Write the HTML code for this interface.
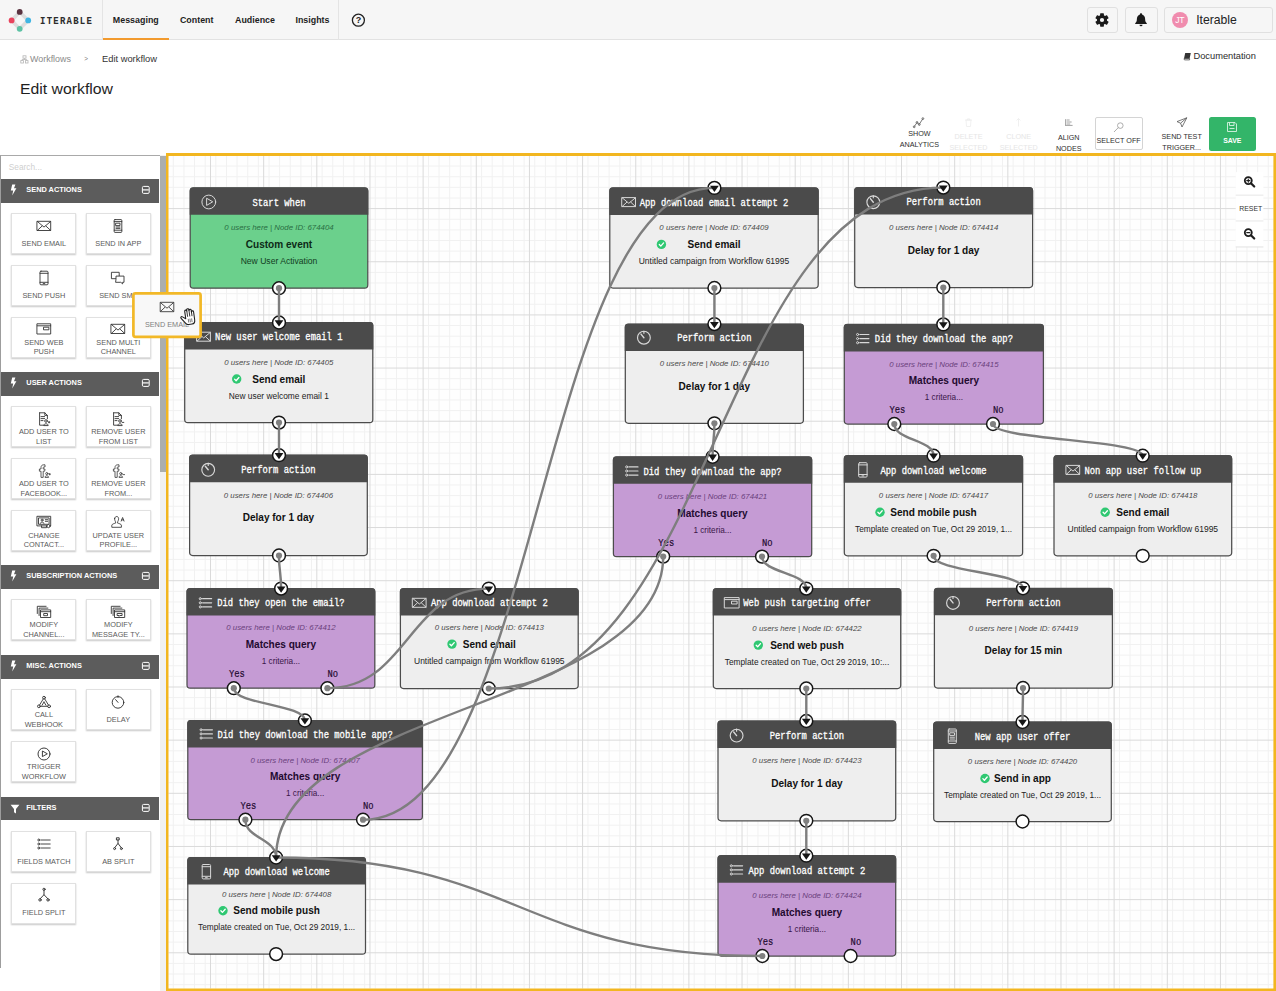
<!DOCTYPE html>
<html lang="en"><head><meta charset="utf-8"><title>Edit workflow</title>
<style>
*{box-sizing:border-box;margin:0;padding:0}
html,body{width:1276px;height:991px;overflow:hidden;background:#fff}
body{position:relative;font-family:"Liberation Sans",sans-serif;color:#333}
.abs{position:absolute}
.t{position:absolute;white-space:nowrap;line-height:1;transform:translate(-50%,-50%)}
.tl{position:absolute;white-space:nowrap;line-height:1;transform:translate(0,-50%);transform-origin:0 50%}
#nav{position:absolute;left:0;top:0;width:1276px;height:40px;background:#f6f6f6;border-bottom:1px solid #e2e2e2}
.navi{font-weight:bold;font-size:8.9px;color:#1d1d1d}
.nbtn{position:absolute;top:7px;height:26px;border:1px solid #e0e0e0;border-radius:3px;background:#f6f6f6}
.sh{position:absolute;left:1px;width:157.9px;height:23.4px;background:#5c5c5c}
.sh span{position:absolute;left:25.3px;top:46%;transform:translateY(-50%);color:#fff;font-weight:bold;font-size:7.4px;line-height:1;white-space:nowrap}
.card{position:absolute;width:65.3px;height:41px;background:#fff;border:1px solid #e1e1e1;box-shadow:0 1px 1.5px rgba(0,0,0,.22)}
.card .l{position:absolute;left:0;right:0;text-align:center;font-size:7.35px;color:#5a5a5a;line-height:9.8px;white-space:nowrap}
.card svg{position:absolute;left:50%;top:11.8px;transform:translate(-50%,-50%);overflow:visible}
.tb{position:absolute;text-align:center;font-size:7.2px;line-height:11.2px;color:#2e2e2e;white-space:nowrap;transform:translateX(-50%)}
.tb.dis{color:#e6e6e6}
</style></head>
<body>
<div id="nav"><svg class="abs" style="left:0;top:0" width="100" height="40" viewBox="0 0 100 40">
<path d="M19.7 11.9 L28.2 20.4 L19.7 28.8 L11.6 20.4 Z" fill="none" stroke="#dedede" stroke-width="3.6" stroke-linejoin="round"/>
<circle cx="19.7" cy="11.9" r="2.9" fill="#5a3340"/><circle cx="11.6" cy="20.4" r="2.9" fill="#e8435d"/>
<circle cx="28.2" cy="20.4" r="2.9" fill="#3fb5e3"/><circle cx="19.7" cy="28.8" r="2.9" fill="#5cc2a4"/>
</svg><div class="abs" style="left:40.4px;top:20.9px;white-space:nowrap;line-height:1;transform-origin:0 50%;transform:translate(0,-50%) scaleX(.87);font-family:'Liberation Mono', monospace;font-weight:bold;font-size:10.3px;letter-spacing:1.45px;color:#2b2b2b">ITERABLE</div><div class="abs" style="left:102px;top:0;width:1px;height:40px;background:#e4e4e4"></div><div class="abs" style="left:338px;top:0;width:1px;height:40px;background:#e4e4e4"></div><div class="t navi" style="left:135.8px;top:20px">Messaging</div><div class="t navi" style="left:196.7px;top:20px">Content</div><div class="t navi" style="left:255px;top:20px">Audience</div><div class="t navi" style="left:312.5px;top:20px">Insights</div><div class="abs" style="left:103px;top:37.6px;width:66.3px;height:2.4px;background:#f29a2e"></div><svg class="abs" style="left:350px;top:12px" width="17" height="17" viewBox="0 0 17 17"><circle cx="8.4" cy="8.2" r="6" fill="none" stroke="#222" stroke-width="1.3"/>
<text x="8.4" y="11.4" text-anchor="middle" font-family="Liberation Sans, sans-serif" font-weight="bold" font-size="9" fill="#222">?</text></svg><div class="nbtn" style="left:1086.5px;width:31px"></div><div class="nbtn" style="left:1125px;width:32.5px"></div><div class="nbtn" style="left:1164px;width:108.5px"></div><svg class="abs" style="left:1094px;top:12px" width="16" height="16" viewBox="-8 -8 16 16"><circle r="3.6" fill="none" stroke="#1a1a1a" stroke-width="3"/><rect x="-1.9" y="-6.7" width="3.8" height="3.6" rx=".6" transform="rotate(0)" fill="#1a1a1a"/><rect x="-1.9" y="-6.7" width="3.8" height="3.6" rx=".6" transform="rotate(60)" fill="#1a1a1a"/><rect x="-1.9" y="-6.7" width="3.8" height="3.6" rx=".6" transform="rotate(120)" fill="#1a1a1a"/><rect x="-1.9" y="-6.7" width="3.8" height="3.6" rx=".6" transform="rotate(180)" fill="#1a1a1a"/><rect x="-1.9" y="-6.7" width="3.8" height="3.6" rx=".6" transform="rotate(240)" fill="#1a1a1a"/><rect x="-1.9" y="-6.7" width="3.8" height="3.6" rx=".6" transform="rotate(300)" fill="#1a1a1a"/></svg><svg class="abs" style="left:1133px;top:12px" width="16" height="16" viewBox="0 0 16 16"><path d="M8 1.3c.7 0 1.1.5 1.1 1.1 2 .6 3 2.3 3 4.4 0 2.6.8 3.6 1.7 4.4v.8H2.2v-.8c.9-.8 1.7-1.8 1.7-4.4 0-2.1 1-3.8 3-4.4 0-.6.4-1.1 1.1-1.1z" fill="#1a1a1a"/><path d="M6.5 12.8h3a1.5 1.5 0 0 1-3 0z" fill="#1a1a1a"/></svg><div class="abs" style="left:1171.6px;top:11.8px;width:16.4px;height:16.4px;border-radius:50%;background:#f08cae"></div><div class="t" style="left:1179.8px;top:20.2px;font-size:8.6px;color:#fff;letter-spacing:-0.2px">JT</div><div class="tl" style="left:1196.2px;top:20.2px;font-size:12.2px;color:#222">Iterable</div></div>
<svg class="abs" style="left:19.5px;top:54.5px" width="9" height="9" viewBox="0 0 9 9" fill="none" stroke="#b5b5b5" stroke-width=".8"><rect x="3" y=".8" width="3" height="2.4"/><rect x=".8" y="5.6" width="2.6" height="2.4"/><rect x="5.4" y="5.6" width="2.6" height="2.4"/><path d="M4.5 3.2v1.3M2.1 5.6V4.5h4.6v1.1"/></svg><div class="tl" style="left:29.8px;top:59.9px;font-size:8.2px;color:#8a8a8a;transform:translate(0,-50%) scaleX(1.089)">Workflows</div><div class="t" style="left:86.2px;top:59.2px;font-size:8px;color:#777;transform:translate(-50%,-50%) scaleX(.8)">&gt;</div><div class="tl" style="left:102px;top:59.0px;font-size:8.6px;color:#333;transform:translate(0,-50%) scaleX(1.086)">Edit workflow</div><div class="tl" style="left:20.4px;top:89.4px;font-size:14.2px;color:#1f1f1f;transform:translate(0,-50%) scaleX(1.112)">Edit workflow</div><svg class="abs" style="left:1182.5px;top:52.3px" width="9" height="9" viewBox="0 0 9 9"><path d="M2.2 1h5.6L6.6 6.6H1z" fill="#333"/><path d="M1 6.6h5.6v1.3H1.9A.9.9 0 0 1 1 7z" fill="none" stroke="#333" stroke-width=".7"/></svg><div class="tl" style="left:1193.5px;top:57.2px;font-size:9.29px;color:#2b2b2b">Documentation</div>
<div class="tb " style="left:919.4px;top:127.6px">SHOW<br>ANALYTICS</div><div class="tb dis" style="left:968.5px;top:130.7px">DELETE<br>SELECTED</div><div class="tb dis" style="left:1018.7px;top:130.7px">CLONE<br>SELECTED</div><div class="tb " style="left:1068.7px;top:131.6px">ALIGN<br>NODES</div><div class="abs" style="left:1095px;top:117px;width:47.5px;height:32.8px;border:1px solid #d4d4d4;border-radius:2px;background:#fff"></div><div class="tb " style="left:1118.6px;top:134.7px">SELECT OFF</div><div class="tb " style="left:1181.7px;top:130.7px">SEND TEST<br>TRIGGER...</div><div class="abs" style="left:1209px;top:117px;width:46.6px;height:33.6px;border-radius:2.5px;background:#33b569"></div><div class="tb" style="left:1232.3px;top:134.7px;color:#fff;font-weight:bold;font-size:6.9px">SAVE</div><svg class="abs" style="left:912px;top:116px" width="14" height="13" viewBox="0 0 14 13" fill="none" stroke="#555" stroke-width=".8"><path d="M2.2 10.6 5 6.6l2.2 1.8 3.6-5.6"/><circle cx="2.2" cy="10.8" r=".9"/><circle cx="5" cy="6.4" r=".9"/><circle cx="7.3" cy="8.5" r=".9"/><circle cx="10.9" cy="2.6" r=".9"/></svg><svg class="abs" style="left:963px;top:117px" width="11" height="11" viewBox="0 0 11 11" fill="none" stroke="#ececec" stroke-width=".8"><path d="M3 3h5l-.5 6.5h-4zM2 3h7M4.5 3V1.8h2V3"/></svg><svg class="abs" style="left:1013px;top:117px" width="11" height="11" viewBox="0 0 11 11" fill="none" stroke="#ececec" stroke-width=".8"><path d="M5.5 1.5v8M3.5 3.5l2-2 2 2"/></svg><svg class="abs" style="left:1063px;top:117px" width="12" height="11" viewBox="0 0 12 11" fill="none" stroke="#8a8a8a" stroke-width=".8"><path d="M2.6 2.2v6M3.6 3h3M3.6 5h5M3.6 7h3.6M2 8.4h7.6"/></svg><svg class="abs" style="left:1112px;top:121px" width="13" height="13" viewBox="0 0 13 13" fill="none" stroke="#999" stroke-width=".8"><circle cx="8.3" cy="4.6" r="2.8"/><path d="M6.3 6.6 2 11"/></svg><svg class="abs" style="left:1175px;top:116px" width="14" height="13" viewBox="0 0 14 13" fill="none" stroke="#555" stroke-width=".8" stroke-linejoin="round"><path d="M11.8 1.8 2 5.6l3.6 1.6 1.4 3.8zM5.6 7.2l6.2-5.4"/></svg><svg class="abs" style="left:1225.7px;top:121.3px" width="12" height="12" viewBox="0 0 12 12" fill="none" stroke="#d8f3e2" stroke-width=".9"><path d="M1.5 1.5h7.5l1.5 1.5v7.5h-9z"/><path d="M3.5 1.5v3h4.5v-3M3.5 7.5h5"/></svg>
<div class="abs" style="left:0;top:155px;width:160px;height:813px;border-left:1px solid #9d9d9d;border-top:1px solid #a9a9a9;background:#fff"></div><div class="abs" style="left:160px;top:155px;width:6px;height:836px;background:#f1f1f1"></div><div class="abs" style="left:160px;top:155.5px;width:5.8px;height:316.3px;background:#abaead"></div><div class="tl" style="left:8.8px;top:167.2px;font-size:8.3px;color:#cfcfcf">Search...</div><div class="sh" style="top:179.3px"><svg class="abs" style="left:7.6px;top:5px" width="9" height="12" viewBox="0 0 9 12"><path d="M3.2.6H6.4L5 4.2H7.4L3.2 11.4 4.2 6.4H1.8z" fill="#fff"/></svg><span>SEND ACTIONS</span><svg class="abs" style="left:140.4px;top:5.9px" width="10" height="10" viewBox="0 0 10 10" fill="none" stroke="#fff" stroke-width="1"><rect x="1.4" y="1.4" width="6.8" height="7" rx="1.2"/><path d="M1.8 4.9h6" stroke-width="1.2"/></svg></div><div class="card" style="left:11.2px;top:213.2px"><svg width="15" height="11" viewBox="0 0 15 11" fill="none" stroke="#333" stroke-width="0.9" stroke-linejoin="round" stroke-linecap="round"><rect x=".8" y=".8" width="13.4" height="9.2"/><path d="M.9 1 7.5 6.6 14.1 1M.9 9.9l4.6-4.3M14.1 9.9 9.5 5.6"/></svg><div class="l" style="top:24.7px">SEND EMAIL</div></div><div class="card" style="left:85.7px;top:213.2px"><svg width="10" height="14" viewBox="0 0 10 14" fill="none" stroke="#333" stroke-width="0.9" stroke-linejoin="round" stroke-linecap="round"><rect x="1.2" y=".6" width="7.6" height="12.8" rx=".8"/><path d="M1.2 2.6h7.6M1.2 11.2h7.6M3 4.2h4v2.4H3zM3 8h4M3 9.4h4"/></svg><div class="l" style="top:24.7px">SEND IN APP</div></div><div class="card" style="left:11.2px;top:264.9px"><svg width="10" height="15" viewBox="0 0 10 15" fill="none" stroke="#333" stroke-width="0.9" stroke-linejoin="round" stroke-linecap="round"><rect x="1" y=".7" width="8" height="13.6" rx="1"/><path d="M1 2.8h8M1 11.8h8M4.2 13.1h1.6"/></svg><div class="l" style="top:24.7px">SEND PUSH</div></div><div class="card" style="left:85.7px;top:264.9px"><svg width="14" height="13" viewBox="0 0 14 13" fill="none" stroke="#333" stroke-width="0.9" stroke-linejoin="round" stroke-linecap="round"><rect x=".8" y=".8" width="7.4" height="6.4"/><path d="M5 7.2V4.6h8v6.2h-1.4v1.6l-1.8-1.6H5z" fill="#fff"/></svg><div class="l" style="top:24.7px">SEND SMS</div></div><div class="card" style="left:11.2px;top:316.6px"><svg width="15" height="12" viewBox="0 0 15 12" fill="none" stroke="#333" stroke-width="0.9" stroke-linejoin="round" stroke-linecap="round"><rect x=".8" y=".8" width="13.4" height="10.2"/><path d="M.8 2.8h13.4"/><rect x="7.4" y="4.2" width="5" height="2.6"/></svg><div class="l" style="top:20px">SEND WEB<br>PUSH</div></div><div class="card" style="left:85.7px;top:316.6px"><svg width="15" height="11" viewBox="0 0 15 11" fill="none" stroke="#333" stroke-width="0.9" stroke-linejoin="round" stroke-linecap="round"><rect x=".8" y=".8" width="13.4" height="9.2"/><path d="M.9 1 7.5 6.6 14.1 1M.9 9.9l4.6-4.3M14.1 9.9 9.5 5.6"/></svg><div class="l" style="top:20px">SEND MULTI<br>CHANNEL</div></div><div class="sh" style="top:372.3px"><svg class="abs" style="left:7.6px;top:5px" width="9" height="12" viewBox="0 0 9 12"><path d="M3.2.6H6.4L5 4.2H7.4L3.2 11.4 4.2 6.4H1.8z" fill="#fff"/></svg><span>USER ACTIONS</span><svg class="abs" style="left:140.4px;top:5.9px" width="10" height="10" viewBox="0 0 10 10" fill="none" stroke="#fff" stroke-width="1"><rect x="1.4" y="1.4" width="6.8" height="7" rx="1.2"/><path d="M1.8 4.9h6" stroke-width="1.2"/></svg></div><div class="card" style="left:11.2px;top:406.2px"><svg width="12" height="14" viewBox="0 0 12 14" fill="none" stroke="#333" stroke-width="0.9" stroke-linejoin="round" stroke-linecap="round"><path d="M1.6.8h5.2l2.6 2.6v3.4M1.6.8v12.4h4M6.8.8v2.6h2.6M3 4.6h3.6M3 6.6h3.6M3 8.6h2"/><circle cx="8" cy="9" r="1.3"/><path d="M5.8 13.2c0-2 4.4-2 4.4 0zM10.4 10.2h1.4M11.1 9.5v1.4"/></svg><div class="l" style="top:20px">ADD USER TO<br>LIST</div></div><div class="card" style="left:85.7px;top:406.2px"><svg width="12" height="14" viewBox="0 0 12 14" fill="none" stroke="#333" stroke-width="0.9" stroke-linejoin="round" stroke-linecap="round"><path d="M1.6.8h5.2l2.6 2.6v3.4M1.6.8v12.4h4M6.8.8v2.6h2.6M3 4.6h3.6M3 6.6h3.6M3 8.6h2"/><circle cx="8" cy="9" r="1.3"/><path d="M5.8 13.2c0-2 4.4-2 4.4 0zM10.2 10.4h1.6"/></svg><div class="l" style="top:20px">REMOVE USER<br>FROM LIST</div></div><div class="card" style="left:11.2px;top:457.9px"><svg width="14" height="14" viewBox="0 0 14 14" fill="none" stroke="#333" stroke-width="0.8" stroke-linejoin="round" stroke-linecap="round"><path d="M4 13V7.2H2.4V5H4V3.6C4 1.8 5 .8 6.8 .8H8V3H7C6.4 3 6.2 3.2 6.2 3.8V5H8L7.7 7.2H6.2V13z"/><circle cx="9.8" cy="9.6" r="1.1"/><path d="M8 13c0-1.8 3.6-1.8 3.6 0zM12 10.2h1.4M12.7 9.5v1.4"/></svg><div class="l" style="top:20px">ADD USER TO<br>FACEBOOK...</div></div><div class="card" style="left:85.7px;top:457.9px"><svg width="14" height="14" viewBox="0 0 14 14" fill="none" stroke="#333" stroke-width="0.8" stroke-linejoin="round" stroke-linecap="round"><path d="M4 13V7.2H2.4V5H4V3.6C4 1.8 5 .8 6.8 .8H8V3H7C6.4 3 6.2 3.2 6.2 3.8V5H8L7.7 7.2H6.2V13z"/><circle cx="9.8" cy="9.6" r="1.1"/><path d="M8 13c0-1.8 3.6-1.8 3.6 0zM11.8 10.6h1.8"/></svg><div class="l" style="top:20px">REMOVE USER<br>FROM...</div></div><div class="card" style="left:11.2px;top:509.6px"><svg width="15" height="13" viewBox="0 0 15 13" fill="none" stroke="#333" stroke-width="0.9" stroke-linejoin="round" stroke-linecap="round"><rect x=".8" y=".8" width="13.4" height="9.6"/><rect x="2.4" y="2.4" width="10.2" height="6.4"/><circle cx="5.6" cy="4.6" r="1"/><path d="M3.8 7.8c0-1.7 3.6-1.7 3.6 0M8.8 4.2h2.4M8.8 5.8h2.4M5 10.4v1.8h5v-1.8"/><circle cx="12" cy="10.6" r="1.6" fill="#fff"/></svg><div class="l" style="top:20px">CHANGE<br>CONTACT...</div></div><div class="card" style="left:85.7px;top:509.6px"><svg width="14" height="13" viewBox="0 0 14 13" fill="none" stroke="#333" stroke-width="0.85" stroke-linejoin="round" stroke-linecap="round"><path d="M3.6 3.2C3.6 .2 7.6 .2 7.6 3.2 7.6 5 6.8 5.6 6.6 6.6V7.6C7.8 8 10 8.4 10.4 9.6V11.8H.8V9.6C1.2 8.4 3.4 8 4.6 7.6V6.6C4.4 5.6 3.6 5 3.6 3.2zM10.2 5.6 11.6 2l1.4 3.6M10.7 4.4h1.8"/></svg><div class="l" style="top:20px">UPDATE USER<br>PROFILE...</div></div><div class="sh" style="top:565.4px"><svg class="abs" style="left:7.6px;top:5px" width="9" height="12" viewBox="0 0 9 12"><path d="M3.2.6H6.4L5 4.2H7.4L3.2 11.4 4.2 6.4H1.8z" fill="#fff"/></svg><span>SUBSCRIPTION ACTIONS</span><svg class="abs" style="left:140.4px;top:5.9px" width="10" height="10" viewBox="0 0 10 10" fill="none" stroke="#fff" stroke-width="1"><rect x="1.4" y="1.4" width="6.8" height="7" rx="1.2"/><path d="M1.8 4.9h6" stroke-width="1.2"/></svg></div><div class="card" style="left:11.2px;top:599.3px"><svg width="15" height="13" viewBox="0 0 15 13" fill="none" stroke="#333" stroke-width="0.9" stroke-linejoin="round" stroke-linecap="round"><path d="M.8 8V.8h8.8M2.6 10V2.6h8.8"/><rect x="4.4" y="4.4" width="9.8" height="7.6"/><path d="M4.4 6.2h9.8"/><rect x="7.6" y="8" width="3.4" height="2.2"/></svg><div class="l" style="top:20px">MODIFY<br>CHANNEL...</div></div><div class="card" style="left:85.7px;top:599.3px"><svg width="15" height="13" viewBox="0 0 15 13" fill="none" stroke="#333" stroke-width="0.9" stroke-linejoin="round" stroke-linecap="round"><path d="M.8 8V.8h8.8M2.6 10V2.6h8.8"/><rect x="4.4" y="4.4" width="9.8" height="7.6"/><path d="M4.4 6.2h9.8M7 8h4.6v2H9.4l-.8.9V10H7z"/></svg><div class="l" style="top:20px">MODIFY<br>MESSAGE TY...</div></div><div class="sh" style="top:655.2px"><svg class="abs" style="left:7.6px;top:5px" width="9" height="12" viewBox="0 0 9 12"><path d="M3.2.6H6.4L5 4.2H7.4L3.2 11.4 4.2 6.4H1.8z" fill="#fff"/></svg><span>MISC. ACTIONS</span><svg class="abs" style="left:140.4px;top:5.9px" width="10" height="10" viewBox="0 0 10 10" fill="none" stroke="#fff" stroke-width="1"><rect x="1.4" y="1.4" width="6.8" height="7" rx="1.2"/><path d="M1.8 4.9h6" stroke-width="1.2"/></svg></div><div class="card" style="left:11.2px;top:689.1px"><svg width="15" height="13" viewBox="0 0 15 13" fill="none" stroke="#333" stroke-width="0.9" stroke-linejoin="round" stroke-linecap="round"><circle cx="7.5" cy="2.2" r="1.4"/><circle cx="2.4" cy="10.8" r="1.4"/><circle cx="12.6" cy="10.8" r="1.4"/><path d="M6.8 3.4 3 9.6M8.2 3.4l3.8 6.2M3.8 10.8h7.4M7.5 6.5 5.5 9.8M7.5 6.5l2 3.3"/></svg><div class="l" style="top:20px">CALL<br>WEBHOOK</div></div><div class="card" style="left:85.7px;top:689.1px"><svg width="14" height="14" viewBox="0 0 14 14" fill="none" stroke="#333" stroke-width="0.95" stroke-linejoin="round" stroke-linecap="round"><circle cx="7" cy="7.4" r="5.8"/><path d="M7 7.4 4.6 4.6M7 .8v1.6"/></svg><div class="l" style="top:24.7px">DELAY</div></div><div class="card" style="left:11.2px;top:740.8px"><svg width="14" height="14" viewBox="0 0 14 14" fill="none" stroke="#333" stroke-width="0.95" stroke-linejoin="round" stroke-linecap="round"><circle cx="7" cy="7" r="6"/><path d="M5.4 4.4v5.2L10 7z"/></svg><div class="l" style="top:20px">TRIGGER<br>WORKFLOW</div></div><div class="sh" style="top:797px"><svg class="abs" style="left:8.6px;top:6.6px" width="10" height="11" viewBox="0 0 10 11"><path d="M.6.8h8.8L6 5v4.6L4 8.2V5z" fill="#fff"/></svg><span>FILTERS</span><svg class="abs" style="left:140.4px;top:5.9px" width="10" height="10" viewBox="0 0 10 10" fill="none" stroke="#fff" stroke-width="1"><rect x="1.4" y="1.4" width="6.8" height="7" rx="1.2"/><path d="M1.8 4.9h6" stroke-width="1.2"/></svg></div><div class="card" style="left:11.2px;top:830.9px"><svg width="14" height="12" viewBox="0 0 14 12" fill="none" stroke="#333" stroke-width="0.9" stroke-linejoin="round" stroke-linecap="round"><circle cx="1.8" cy="2" r="1"/><circle cx="1.8" cy="6" r="1"/><circle cx="1.8" cy="10" r="1"/><path d="M4.2 2h9M4.2 6h9M4.2 10h9"/></svg><div class="l" style="top:24.7px">FIELDS MATCH</div></div><div class="card" style="left:85.7px;top:830.9px"><svg width="10" height="14" viewBox="0 0 10 14" fill="none" stroke="#333" stroke-width="0.95" stroke-linejoin="round" stroke-linecap="round"><rect x="3.8" y=".8" width="2.4" height="2.2"/><path d="M5 3v3.4L1.8 10.6M5 6.4l3.2 4.2"/><circle cx="1.6" cy="11.6" r="1"/><circle cx="8.4" cy="11.6" r="1"/></svg><div class="l" style="top:24.7px">AB SPLIT</div></div><div class="card" style="left:11.2px;top:882.6px"><svg width="12" height="15" viewBox="0 0 12 15" fill="none" stroke="#333" stroke-width="0.95" stroke-linejoin="round" stroke-linecap="round"><circle cx="6" cy="1.8" r="1.1"/><path d="M6 2.9v4.3L2.2 11.2M6 7.2l3.8 4"/><circle cx="2" cy="12.4" r="1.2"/><circle cx="10" cy="12.4" r="1.2"/></svg><div class="l" style="top:24.7px">FIELD SPLIT</div></div>
<svg class="abs" style="left:0;top:0" width="1276" height="991" viewBox="0 0 1276 991">
<defs>
<clipPath id="cv"><rect x="168.5" y="156" width="1105" height="832.4"/></clipPath>
</defs>
<rect x="166" y="153" width="1110" height="838" fill="#fefefe"/>
<path d="M173.30 155.9V988.5M183.93 155.9V988.5M194.56 155.9V988.5M205.19 155.9V988.5M215.82 155.9V988.5M226.45 155.9V988.5M237.08 155.9V988.5M247.71 155.9V988.5M258.34 155.9V988.5M268.98 155.9V988.5M279.61 155.9V988.5M290.24 155.9V988.5M300.87 155.9V988.5M311.50 155.9V988.5M322.13 155.9V988.5M332.76 155.9V988.5M343.39 155.9V988.5M354.02 155.9V988.5M364.65 155.9V988.5M375.29 155.9V988.5M385.92 155.9V988.5M396.55 155.9V988.5M407.18 155.9V988.5M417.81 155.9V988.5M428.44 155.9V988.5M439.07 155.9V988.5M449.70 155.9V988.5M460.33 155.9V988.5M470.96 155.9V988.5M481.60 155.9V988.5M492.23 155.9V988.5M502.86 155.9V988.5M513.49 155.9V988.5M524.12 155.9V988.5M534.75 155.9V988.5M545.38 155.9V988.5M556.01 155.9V988.5M566.64 155.9V988.5M577.27 155.9V988.5M587.91 155.9V988.5M598.54 155.9V988.5M609.17 155.9V988.5M619.80 155.9V988.5M630.43 155.9V988.5M641.06 155.9V988.5M651.69 155.9V988.5M662.32 155.9V988.5M672.95 155.9V988.5M683.58 155.9V988.5M694.22 155.9V988.5M704.85 155.9V988.5M715.48 155.9V988.5M726.11 155.9V988.5M736.74 155.9V988.5M747.37 155.9V988.5M758.00 155.9V988.5M768.63 155.9V988.5M779.26 155.9V988.5M789.89 155.9V988.5M800.53 155.9V988.5M811.16 155.9V988.5M821.79 155.9V988.5M832.42 155.9V988.5M843.05 155.9V988.5M853.68 155.9V988.5M864.31 155.9V988.5M874.94 155.9V988.5M885.57 155.9V988.5M896.20 155.9V988.5M906.84 155.9V988.5M917.47 155.9V988.5M928.10 155.9V988.5M938.73 155.9V988.5M949.36 155.9V988.5M959.99 155.9V988.5M970.62 155.9V988.5M981.25 155.9V988.5M991.88 155.9V988.5M1002.51 155.9V988.5M1013.15 155.9V988.5M1023.78 155.9V988.5M1034.41 155.9V988.5M1045.04 155.9V988.5M1055.67 155.9V988.5M1066.30 155.9V988.5M1076.93 155.9V988.5M1087.56 155.9V988.5M1098.19 155.9V988.5M1108.82 155.9V988.5M1119.46 155.9V988.5M1130.09 155.9V988.5M1140.72 155.9V988.5M1151.35 155.9V988.5M1161.98 155.9V988.5M1172.61 155.9V988.5M1183.24 155.9V988.5M1193.87 155.9V988.5M1204.50 155.9V988.5M1215.13 155.9V988.5M1225.77 155.9V988.5M1236.40 155.9V988.5M1247.03 155.9V988.5M1257.66 155.9V988.5M1268.29 155.9V988.5M168.4 166.08H1273.5M168.4 176.71H1273.5M168.4 187.34H1273.5M168.4 197.97H1273.5M168.4 219.24H1273.5M168.4 229.87H1273.5M168.4 240.50H1273.5M168.4 251.13H1273.5M168.4 272.39H1273.5M168.4 283.02H1273.5M168.4 293.65H1273.5M168.4 304.28H1273.5M168.4 325.55H1273.5M168.4 336.18H1273.5M168.4 346.81H1273.5M168.4 357.44H1273.5M168.4 378.70H1273.5M168.4 389.33H1273.5M168.4 399.96H1273.5M168.4 410.59H1273.5M168.4 431.86H1273.5M168.4 442.49H1273.5M168.4 453.12H1273.5M168.4 463.75H1273.5M168.4 485.01H1273.5M168.4 495.64H1273.5M168.4 506.27H1273.5M168.4 516.90H1273.5M168.4 538.17H1273.5M168.4 548.80H1273.5M168.4 559.43H1273.5M168.4 570.06H1273.5M168.4 591.32H1273.5M168.4 601.95H1273.5M168.4 612.58H1273.5M168.4 623.21H1273.5M168.4 644.48H1273.5M168.4 655.11H1273.5M168.4 665.74H1273.5M168.4 676.37H1273.5M168.4 697.63H1273.5M168.4 708.26H1273.5M168.4 718.89H1273.5M168.4 729.52H1273.5M168.4 750.79H1273.5M168.4 761.42H1273.5M168.4 772.05H1273.5M168.4 782.68H1273.5M168.4 803.94H1273.5M168.4 814.57H1273.5M168.4 825.20H1273.5M168.4 835.83H1273.5M168.4 857.10H1273.5M168.4 867.73H1273.5M168.4 878.36H1273.5M168.4 888.99H1273.5M168.4 910.25H1273.5M168.4 920.88H1273.5M168.4 931.51H1273.5M168.4 942.14H1273.5M168.4 963.41H1273.5M168.4 974.04H1273.5M168.4 984.67H1273.5" fill="none" stroke="#f1f1f1" stroke-width="1"/>
<path d="M210.50 155.9V988.5M263.66 155.9V988.5M316.81 155.9V988.5M369.97 155.9V988.5M423.12 155.9V988.5M476.28 155.9V988.5M529.44 155.9V988.5M582.59 155.9V988.5M635.75 155.9V988.5M688.90 155.9V988.5M742.06 155.9V988.5M795.21 155.9V988.5M848.37 155.9V988.5M901.52 155.9V988.5M954.68 155.9V988.5M1007.83 155.9V988.5M1060.98 155.9V988.5M1114.14 155.9V988.5M1167.30 155.9V988.5M1220.45 155.9V988.5M168.4 208.60H1273.5M168.4 261.76H1273.5M168.4 314.91H1273.5M168.4 368.07H1273.5M168.4 421.22H1273.5M168.4 474.38H1273.5M168.4 527.54H1273.5M168.4 580.69H1273.5M168.4 633.85H1273.5M168.4 687.00H1273.5M168.4 740.15H1273.5M168.4 793.31H1273.5M168.4 846.46H1273.5M168.4 899.62H1273.5M168.4 952.78H1273.5" fill="none" stroke="#dadada" stroke-width="1"/>
<g clip-path="url(#cv)">
<g>
<rect x="190.2" y="187.8" width="177.6" height="100.4" rx="3.2" fill="#6bd08c" stroke="#4c4c4c" stroke-width="1.25"/>
<path d="M189.7 214.8V190.8a3.4 3.4 0 0 1 3.4 -3.4H364.9a3.4 3.4 0 0 1 3.4 3.4V214.8z" fill="#4b4b4b"/>
<g transform="translate(208.8 202.0)" fill="none" stroke="#d8d8d8" stroke-width="1" stroke-linejoin="round" stroke-linecap="round"><circle r="6.9"/><path d="M-2.2 -3.4v6.8L3.6 0z"/></g>
<text x="279.0" y="205.6" text-anchor="middle" font-family="Liberation Mono, monospace" font-size="10.4" fill="#fff" stroke="#fff" stroke-width=".3" textLength="53.1" lengthAdjust="spacingAndGlyphs">Start when</text>
<text x="279.0" y="230.1" text-anchor="middle" font-family="Liberation Sans, sans-serif" font-style="italic" font-size="7.85" fill="#2a6e43">0 users here | Node ID: 674404</text>
<text x="279.0" y="247.8" text-anchor="middle" font-family="Liberation Sans, sans-serif" font-weight="bold" font-size="10.05" fill="#0d2a17">Custom event</text>
<text x="279.0" y="263.8" text-anchor="middle" font-family="Liberation Sans, sans-serif" font-size="8.4" fill="#123d22" textLength="76.7" lengthAdjust="spacingAndGlyphs">New User Activation</text>
</g>
<g>
<rect x="184.7" y="322.5" width="188.1" height="100.1" rx="3.2" fill="#eeeeee" stroke="#4c4c4c" stroke-width="1.25"/>
<path d="M184.2 349.5V325.5a3.4 3.4 0 0 1 3.4 -3.4H369.9a3.4 3.4 0 0 1 3.4 3.4V349.5z" fill="#4b4b4b"/>
<g transform="translate(203.7 336.7)" fill="none" stroke="#d8d8d8" stroke-width="1" stroke-linejoin="round" stroke-linecap="round"><rect x="-6.7" y="-4.5" width="13.4" height="9"/><path d="M-6.6 -4.3 0 1.2 6.6 -4.3M-6.6 4.4l4.6-4.3M6.6 4.4 2 .1"/></g>
<text x="278.8" y="340.3" text-anchor="middle" font-family="Liberation Mono, monospace" font-size="10.4" fill="#fff" stroke="#fff" stroke-width=".3" textLength="127.4" lengthAdjust="spacingAndGlyphs">New user welcome email 1</text>
<text x="278.8" y="364.8" text-anchor="middle" font-family="Liberation Sans, sans-serif" font-style="italic" font-size="7.85" fill="#4a4a4a">0 users here | Node ID: 674405</text>
<text x="278.8" y="382.5" text-anchor="middle" font-family="Liberation Sans, sans-serif" font-weight="bold" font-size="10.05" fill="#111">Send email</text>
<text x="278.8" y="398.5" text-anchor="middle" font-family="Liberation Sans, sans-serif" font-size="8.4" fill="#222" textLength="100" lengthAdjust="spacingAndGlyphs">New user welcome email 1</text>
<g transform="translate(236.7 379.0)"><circle r="4.7" fill="#2fc872"/><path d="M-2.1 .1 -.6 1.7 2.2 -1.5" fill="none" stroke="#fff" stroke-width="1.3" stroke-linecap="round" stroke-linejoin="round"/></g>
</g>
<g>
<rect x="189.6" y="455.2" width="177.7" height="100.3" rx="3.2" fill="#eeeeee" stroke="#4c4c4c" stroke-width="1.25"/>
<path d="M189.1 482.2V458.2a3.4 3.4 0 0 1 3.4 -3.4H364.4a3.4 3.4 0 0 1 3.4 3.4V482.2z" fill="#4b4b4b"/>
<g transform="translate(208.2 469.4)" fill="none" stroke="#d8d8d8" stroke-width="1" stroke-linejoin="round" stroke-linecap="round"><circle r="6.4" cy=".4" stroke-width="1.15"/><path d="M0 .4 -2.9 -3.2" stroke-width="1.4"/><path d="M0 -6v2" stroke-width="1.2"/></g>
<text x="278.4" y="473.0" text-anchor="middle" font-family="Liberation Mono, monospace" font-size="10.4" fill="#fff" stroke="#fff" stroke-width=".3" textLength="74.3" lengthAdjust="spacingAndGlyphs">Perform action</text>
<text x="278.4" y="497.5" text-anchor="middle" font-family="Liberation Sans, sans-serif" font-style="italic" font-size="7.85" fill="#4a4a4a">0 users here | Node ID: 674406</text>
<text x="278.4" y="521.2" text-anchor="middle" font-family="Liberation Sans, sans-serif" font-weight="bold" font-size="10.05" fill="#111">Delay for 1 day</text>
</g>
<g>
<rect x="187.0" y="588.6" width="187.8" height="99.6" rx="3.2" fill="#c59bd4" stroke="#4c4c4c" stroke-width="1.25"/>
<path d="M186.5 615.6V591.6a3.4 3.4 0 0 1 3.4 -3.4H371.9a3.4 3.4 0 0 1 3.4 3.4V615.6z" fill="#4b4b4b"/>
<g transform="translate(205.2 602.8)" fill="none" stroke="#d8d8d8" stroke-width="1" stroke-linejoin="round" stroke-linecap="round"><circle cx="-4.9" cy="-4.1" r="1.05"/><circle cx="-4.9" cy="0" r="1.05"/><circle cx="-4.9" cy="4.1" r="1.05"/><path d="M-2.6 -4.1h9M-2.6 0h9M-2.6 4.1h9" stroke-width="1.2"/></g>
<text x="280.9" y="606.4" text-anchor="middle" font-family="Liberation Mono, monospace" font-size="10.4" fill="#fff" stroke="#fff" stroke-width=".3" textLength="127.4" lengthAdjust="spacingAndGlyphs">Did they open the email?</text>
<text x="280.9" y="629.8" text-anchor="middle" font-family="Liberation Sans, sans-serif" font-style="italic" font-size="7.85" fill="#6a3f7c">0 users here | Node ID: 674412</text>
<text x="280.9" y="647.5" text-anchor="middle" font-family="Liberation Sans, sans-serif" font-weight="bold" font-size="10.05" fill="#230a30">Matches query</text>
<text x="280.9" y="663.5" text-anchor="middle" font-family="Liberation Sans, sans-serif" font-size="8.4" fill="#3a1648" textLength="38.2" lengthAdjust="spacingAndGlyphs">1 criteria...</text>
<text x="228.9" y="677.2" font-family="Liberation Mono, monospace" font-size="10.4" fill="#230a30" stroke="#230a30" stroke-width=".2" textLength="15.9" lengthAdjust="spacingAndGlyphs">Yes</text>
<text x="327.4" y="677.2" font-family="Liberation Mono, monospace" font-size="10.4" fill="#230a30" stroke="#230a30" stroke-width=".2" textLength="10.6" lengthAdjust="spacingAndGlyphs">No</text>
</g>
<g>
<rect x="187.8" y="720.5" width="234.6" height="99.2" rx="3.2" fill="#c59bd4" stroke="#4c4c4c" stroke-width="1.25"/>
<path d="M187.3 747.5V723.5a3.4 3.4 0 0 1 3.4 -3.4H419.5a3.4 3.4 0 0 1 3.4 3.4V747.5z" fill="#4b4b4b"/>
<g transform="translate(206.0 733.9)" fill="none" stroke="#d8d8d8" stroke-width="1" stroke-linejoin="round" stroke-linecap="round"><circle cx="-4.9" cy="-4.1" r="1.05"/><circle cx="-4.9" cy="0" r="1.05"/><circle cx="-4.9" cy="4.1" r="1.05"/><path d="M-2.6 -4.1h9M-2.6 0h9M-2.6 4.1h9" stroke-width="1.2"/></g>
<text x="305.1" y="737.5" text-anchor="middle" font-family="Liberation Mono, monospace" font-size="10.4" fill="#fff" stroke="#fff" stroke-width=".3" textLength="175.2" lengthAdjust="spacingAndGlyphs">Did they download the mobile app?</text>
<text x="305.1" y="762.5" text-anchor="middle" font-family="Liberation Sans, sans-serif" font-style="italic" font-size="7.85" fill="#6a3f7c">0 users here | Node ID: 674407</text>
<text x="305.1" y="780.2" text-anchor="middle" font-family="Liberation Sans, sans-serif" font-weight="bold" font-size="10.05" fill="#230a30">Matches query</text>
<text x="305.1" y="796.2" text-anchor="middle" font-family="Liberation Sans, sans-serif" font-size="8.4" fill="#3a1648" textLength="38.2" lengthAdjust="spacingAndGlyphs">1 criteria...</text>
<text x="240.5" y="808.7" font-family="Liberation Mono, monospace" font-size="10.4" fill="#230a30" stroke="#230a30" stroke-width=".2" textLength="15.9" lengthAdjust="spacingAndGlyphs">Yes</text>
<text x="363.0" y="808.7" font-family="Liberation Mono, monospace" font-size="10.4" fill="#230a30" stroke="#230a30" stroke-width=".2" textLength="10.6" lengthAdjust="spacingAndGlyphs">No</text>
</g>
<g>
<rect x="187.8" y="857.5" width="177.7" height="96.6" rx="3.2" fill="#eeeeee" stroke="#4c4c4c" stroke-width="1.25"/>
<path d="M187.3 884.5V860.5a3.4 3.4 0 0 1 3.4 -3.4H362.6a3.4 3.4 0 0 1 3.4 3.4V884.5z" fill="#4b4b4b"/>
<g transform="translate(206.4 871.7)" fill="none" stroke="#d8d8d8" stroke-width="1" stroke-linejoin="round" stroke-linecap="round"><rect x="-4.2" y="-7.2" width="8.4" height="14.4" rx="1"/><path d="M-4.2 -5h8.4M-4.2 4.6h8.4M-.9 6h1.8"/></g>
<text x="276.6" y="875.3" text-anchor="middle" font-family="Liberation Mono, monospace" font-size="10.4" fill="#fff" stroke="#fff" stroke-width=".3" textLength="106.2" lengthAdjust="spacingAndGlyphs">App download welcome</text>
<text x="276.6" y="896.5" text-anchor="middle" font-family="Liberation Sans, sans-serif" font-style="italic" font-size="7.85" fill="#4a4a4a">0 users here | Node ID: 674408</text>
<text x="276.6" y="914.2" text-anchor="middle" font-family="Liberation Sans, sans-serif" font-weight="bold" font-size="10.05" fill="#111">Send mobile push</text>
<text x="276.6" y="930.2" text-anchor="middle" font-family="Liberation Sans, sans-serif" font-size="8.4" fill="#222" textLength="157" lengthAdjust="spacingAndGlyphs">Template created on Tue, Oct 29 2019, 1...</text>
<g transform="translate(223.0 910.7)"><circle r="4.7" fill="#2fc872"/><path d="M-2.1 .1 -.6 1.7 2.2 -1.5" fill="none" stroke="#fff" stroke-width="1.3" stroke-linecap="round" stroke-linejoin="round"/></g>
</g>
<g>
<rect x="400.4" y="588.6" width="177.8" height="99.9" rx="3.2" fill="#eeeeee" stroke="#4c4c4c" stroke-width="1.25"/>
<path d="M399.9 615.6V591.6a3.4 3.4 0 0 1 3.4 -3.4H575.3a3.4 3.4 0 0 1 3.4 3.4V615.6z" fill="#4b4b4b"/>
<g transform="translate(419.4 602.8)" fill="none" stroke="#d8d8d8" stroke-width="1" stroke-linejoin="round" stroke-linecap="round"><rect x="-6.7" y="-4.5" width="13.4" height="9"/><path d="M-6.6 -4.3 0 1.2 6.6 -4.3M-6.6 4.4l4.6-4.3M6.6 4.4 2 .1"/></g>
<text x="489.3" y="606.4" text-anchor="middle" font-family="Liberation Mono, monospace" font-size="10.4" fill="#fff" stroke="#fff" stroke-width=".3" textLength="116.8" lengthAdjust="spacingAndGlyphs">App download attempt 2</text>
<text x="489.3" y="629.9" text-anchor="middle" font-family="Liberation Sans, sans-serif" font-style="italic" font-size="7.85" fill="#4a4a4a">0 users here | Node ID: 674413</text>
<text x="489.3" y="647.6" text-anchor="middle" font-family="Liberation Sans, sans-serif" font-weight="bold" font-size="10.05" fill="#111">Send email</text>
<text x="489.3" y="663.6" text-anchor="middle" font-family="Liberation Sans, sans-serif" font-size="8.4" fill="#222" textLength="150.6" lengthAdjust="spacingAndGlyphs">Untitled campaign from Workflow 61995</text>
<g transform="translate(452.0 644.1)"><circle r="4.7" fill="#2fc872"/><path d="M-2.1 .1 -.6 1.7 2.2 -1.5" fill="none" stroke="#fff" stroke-width="1.3" stroke-linecap="round" stroke-linejoin="round"/></g>
</g>
<g>
<rect x="609.8" y="187.9" width="208.4" height="100.1" rx="3.2" fill="#eeeeee" stroke="#4c4c4c" stroke-width="1.25"/>
<path d="M609.3 214.9V190.9a3.4 3.4 0 0 1 3.4 -3.4H815.3a3.4 3.4 0 0 1 3.4 3.4V214.9z" fill="#4b4b4b"/>
<g transform="translate(628.8 202.1)" fill="none" stroke="#d8d8d8" stroke-width="1" stroke-linejoin="round" stroke-linecap="round"><rect x="-6.7" y="-4.5" width="13.4" height="9"/><path d="M-6.6 -4.3 0 1.2 6.6 -4.3M-6.6 4.4l4.6-4.3M6.6 4.4 2 .1"/></g>
<text x="714.0" y="205.7" text-anchor="middle" font-family="Liberation Mono, monospace" font-size="10.4" fill="#fff" stroke="#fff" stroke-width=".3" textLength="148.7" lengthAdjust="spacingAndGlyphs">App download email attempt 2</text>
<text x="714.0" y="230.2" text-anchor="middle" font-family="Liberation Sans, sans-serif" font-style="italic" font-size="7.85" fill="#4a4a4a">0 users here | Node ID: 674409</text>
<text x="714.0" y="247.9" text-anchor="middle" font-family="Liberation Sans, sans-serif" font-weight="bold" font-size="10.05" fill="#111">Send email</text>
<text x="714.0" y="263.9" text-anchor="middle" font-family="Liberation Sans, sans-serif" font-size="8.4" fill="#222" textLength="150.6" lengthAdjust="spacingAndGlyphs">Untitled campaign from Workflow 61995</text>
<g transform="translate(661.4 244.4)"><circle r="4.7" fill="#2fc872"/><path d="M-2.1 .1 -.6 1.7 2.2 -1.5" fill="none" stroke="#fff" stroke-width="1.3" stroke-linecap="round" stroke-linejoin="round"/></g>
</g>
<g>
<rect x="625.3" y="324.1" width="178.1" height="99.2" rx="3.2" fill="#eeeeee" stroke="#4c4c4c" stroke-width="1.25"/>
<path d="M624.8 351.1V327.1a3.4 3.4 0 0 1 3.4 -3.4H800.5a3.4 3.4 0 0 1 3.4 3.4V351.1z" fill="#4b4b4b"/>
<g transform="translate(643.9 337.3)" fill="none" stroke="#d8d8d8" stroke-width="1" stroke-linejoin="round" stroke-linecap="round"><circle r="6.4" cy=".4" stroke-width="1.15"/><path d="M0 .4 -2.9 -3.2" stroke-width="1.4"/><path d="M0 -6v2" stroke-width="1.2"/></g>
<text x="714.3" y="340.9" text-anchor="middle" font-family="Liberation Mono, monospace" font-size="10.4" fill="#fff" stroke="#fff" stroke-width=".3" textLength="74.3" lengthAdjust="spacingAndGlyphs">Perform action</text>
<text x="714.3" y="366.4" text-anchor="middle" font-family="Liberation Sans, sans-serif" font-style="italic" font-size="7.85" fill="#4a4a4a">0 users here | Node ID: 674410</text>
<text x="714.3" y="390.1" text-anchor="middle" font-family="Liberation Sans, sans-serif" font-weight="bold" font-size="10.05" fill="#111">Delay for 1 day</text>
</g>
<g>
<rect x="613.4" y="456.8" width="198.3" height="99.8" rx="3.2" fill="#c59bd4" stroke="#4c4c4c" stroke-width="1.25"/>
<path d="M612.9 483.8V459.8a3.4 3.4 0 0 1 3.4 -3.4H808.8a3.4 3.4 0 0 1 3.4 3.4V483.8z" fill="#4b4b4b"/>
<g transform="translate(631.6 471.0)" fill="none" stroke="#d8d8d8" stroke-width="1" stroke-linejoin="round" stroke-linecap="round"><circle cx="-4.9" cy="-4.1" r="1.05"/><circle cx="-4.9" cy="0" r="1.05"/><circle cx="-4.9" cy="4.1" r="1.05"/><path d="M-2.6 -4.1h9M-2.6 0h9M-2.6 4.1h9" stroke-width="1.2"/></g>
<text x="712.5" y="474.6" text-anchor="middle" font-family="Liberation Mono, monospace" font-size="10.4" fill="#fff" stroke="#fff" stroke-width=".3" textLength="138.1" lengthAdjust="spacingAndGlyphs">Did they download the app?</text>
<text x="712.5" y="499.1" text-anchor="middle" font-family="Liberation Sans, sans-serif" font-style="italic" font-size="7.85" fill="#6a3f7c">0 users here | Node ID: 674421</text>
<text x="712.5" y="516.8" text-anchor="middle" font-family="Liberation Sans, sans-serif" font-weight="bold" font-size="10.05" fill="#230a30">Matches query</text>
<text x="712.5" y="532.8" text-anchor="middle" font-family="Liberation Sans, sans-serif" font-size="8.4" fill="#3a1648" textLength="38.2" lengthAdjust="spacingAndGlyphs">1 criteria...</text>
<text x="658.3" y="545.6" font-family="Liberation Mono, monospace" font-size="10.4" fill="#230a30" stroke="#230a30" stroke-width=".2" textLength="15.9" lengthAdjust="spacingAndGlyphs">Yes</text>
<text x="762.0" y="545.6" font-family="Liberation Mono, monospace" font-size="10.4" fill="#230a30" stroke="#230a30" stroke-width=".2" textLength="10.6" lengthAdjust="spacingAndGlyphs">No</text>
</g>
<g>
<rect x="713.3" y="588.6" width="187.4" height="99.9" rx="3.2" fill="#eeeeee" stroke="#4c4c4c" stroke-width="1.25"/>
<path d="M712.8 615.6V591.6a3.4 3.4 0 0 1 3.4 -3.4H897.8a3.4 3.4 0 0 1 3.4 3.4V615.6z" fill="#4b4b4b"/>
<g transform="translate(731.9 602.8)" fill="none" stroke="#d8d8d8" stroke-width="1" stroke-linejoin="round" stroke-linecap="round"><rect x="-7.2" y="-5.2" width="14.4" height="10.4"/><path d="M-7.2 -3.2h14.4"/><rect x="0" y="-1.6" width="5.2" height="2.8"/></g>
<text x="807.0" y="606.4" text-anchor="middle" font-family="Liberation Mono, monospace" font-size="10.4" fill="#fff" stroke="#fff" stroke-width=".3" textLength="127.4" lengthAdjust="spacingAndGlyphs">Web push targeting offer</text>
<text x="807.0" y="630.9" text-anchor="middle" font-family="Liberation Sans, sans-serif" font-style="italic" font-size="7.85" fill="#4a4a4a">0 users here | Node ID: 674422</text>
<text x="807.0" y="648.6" text-anchor="middle" font-family="Liberation Sans, sans-serif" font-weight="bold" font-size="10.05" fill="#111">Send web push</text>
<text x="807.0" y="664.6" text-anchor="middle" font-family="Liberation Sans, sans-serif" font-size="8.4" fill="#222" textLength="164.4" lengthAdjust="spacingAndGlyphs">Template created on Tue, Oct 29 2019, 10:...</text>
<g transform="translate(758.3 645.1)"><circle r="4.7" fill="#2fc872"/><path d="M-2.1 .1 -.6 1.7 2.2 -1.5" fill="none" stroke="#fff" stroke-width="1.3" stroke-linecap="round" stroke-linejoin="round"/></g>
</g>
<g>
<rect x="718.0" y="721.0" width="177.7" height="99.8" rx="3.2" fill="#eeeeee" stroke="#4c4c4c" stroke-width="1.25"/>
<path d="M717.5 748.0V724.0a3.4 3.4 0 0 1 3.4 -3.4H892.8a3.4 3.4 0 0 1 3.4 3.4V748.0z" fill="#4b4b4b"/>
<g transform="translate(736.6 735.2)" fill="none" stroke="#d8d8d8" stroke-width="1" stroke-linejoin="round" stroke-linecap="round"><circle r="6.4" cy=".4" stroke-width="1.15"/><path d="M0 .4 -2.9 -3.2" stroke-width="1.4"/><path d="M0 -6v2" stroke-width="1.2"/></g>
<text x="806.9" y="738.8" text-anchor="middle" font-family="Liberation Mono, monospace" font-size="10.4" fill="#fff" stroke="#fff" stroke-width=".3" textLength="74.3" lengthAdjust="spacingAndGlyphs">Perform action</text>
<text x="806.9" y="763.3" text-anchor="middle" font-family="Liberation Sans, sans-serif" font-style="italic" font-size="7.85" fill="#4a4a4a">0 users here | Node ID: 674423</text>
<text x="806.9" y="787.0" text-anchor="middle" font-family="Liberation Sans, sans-serif" font-weight="bold" font-size="10.05" fill="#111">Delay for 1 day</text>
</g>
<g>
<rect x="718.0" y="855.7" width="177.7" height="100.3" rx="3.2" fill="#c59bd4" stroke="#4c4c4c" stroke-width="1.25"/>
<path d="M717.5 882.7V858.7a3.4 3.4 0 0 1 3.4 -3.4H892.8a3.4 3.4 0 0 1 3.4 3.4V882.7z" fill="#4b4b4b"/>
<g transform="translate(736.2 869.9)" fill="none" stroke="#d8d8d8" stroke-width="1" stroke-linejoin="round" stroke-linecap="round"><circle cx="-4.9" cy="-4.1" r="1.05"/><circle cx="-4.9" cy="0" r="1.05"/><circle cx="-4.9" cy="4.1" r="1.05"/><path d="M-2.6 -4.1h9M-2.6 0h9M-2.6 4.1h9" stroke-width="1.2"/></g>
<text x="806.9" y="873.5" text-anchor="middle" font-family="Liberation Mono, monospace" font-size="10.4" fill="#fff" stroke="#fff" stroke-width=".3" textLength="116.8" lengthAdjust="spacingAndGlyphs">App download attempt 2</text>
<text x="806.9" y="898.0" text-anchor="middle" font-family="Liberation Sans, sans-serif" font-style="italic" font-size="7.85" fill="#6a3f7c">0 users here | Node ID: 674424</text>
<text x="806.9" y="915.7" text-anchor="middle" font-family="Liberation Sans, sans-serif" font-weight="bold" font-size="10.05" fill="#230a30">Matches query</text>
<text x="806.9" y="931.7" text-anchor="middle" font-family="Liberation Sans, sans-serif" font-size="8.4" fill="#3a1648" textLength="38.2" lengthAdjust="spacingAndGlyphs">1 criteria...</text>
<text x="757.4" y="945.0" font-family="Liberation Mono, monospace" font-size="10.4" fill="#230a30" stroke="#230a30" stroke-width=".2" textLength="15.9" lengthAdjust="spacingAndGlyphs">Yes</text>
<text x="850.6" y="945.0" font-family="Liberation Mono, monospace" font-size="10.4" fill="#230a30" stroke="#230a30" stroke-width=".2" textLength="10.6" lengthAdjust="spacingAndGlyphs">No</text>
</g>
<g>
<rect x="854.7" y="187.6" width="177.9" height="99.9" rx="3.2" fill="#eeeeee" stroke="#4c4c4c" stroke-width="1.25"/>
<path d="M854.2 214.6V190.6a3.4 3.4 0 0 1 3.4 -3.4H1029.7a3.4 3.4 0 0 1 3.4 3.4V214.6z" fill="#4b4b4b"/>
<g transform="translate(873.3 201.8)" fill="none" stroke="#d8d8d8" stroke-width="1" stroke-linejoin="round" stroke-linecap="round"><circle r="6.4" cy=".4" stroke-width="1.15"/><path d="M0 .4 -2.9 -3.2" stroke-width="1.4"/><path d="M0 -6v2" stroke-width="1.2"/></g>
<text x="943.6" y="205.4" text-anchor="middle" font-family="Liberation Mono, monospace" font-size="10.4" fill="#fff" stroke="#fff" stroke-width=".3" textLength="74.3" lengthAdjust="spacingAndGlyphs">Perform action</text>
<text x="943.6" y="229.9" text-anchor="middle" font-family="Liberation Sans, sans-serif" font-style="italic" font-size="7.85" fill="#4a4a4a">0 users here | Node ID: 674414</text>
<text x="943.6" y="253.6" text-anchor="middle" font-family="Liberation Sans, sans-serif" font-weight="bold" font-size="10.05" fill="#111">Delay for 1 day</text>
</g>
<g>
<rect x="844.3" y="324.4" width="199.1" height="99.6" rx="3.2" fill="#c59bd4" stroke="#4c4c4c" stroke-width="1.25"/>
<path d="M843.8 351.4V327.4a3.4 3.4 0 0 1 3.4 -3.4H1040.5a3.4 3.4 0 0 1 3.4 3.4V351.4z" fill="#4b4b4b"/>
<g transform="translate(862.5 338.6)" fill="none" stroke="#d8d8d8" stroke-width="1" stroke-linejoin="round" stroke-linecap="round"><circle cx="-4.9" cy="-4.1" r="1.05"/><circle cx="-4.9" cy="0" r="1.05"/><circle cx="-4.9" cy="4.1" r="1.05"/><path d="M-2.6 -4.1h9M-2.6 0h9M-2.6 4.1h9" stroke-width="1.2"/></g>
<text x="943.9" y="342.2" text-anchor="middle" font-family="Liberation Mono, monospace" font-size="10.4" fill="#fff" stroke="#fff" stroke-width=".3" textLength="138.1" lengthAdjust="spacingAndGlyphs">Did they download the app?</text>
<text x="943.9" y="366.7" text-anchor="middle" font-family="Liberation Sans, sans-serif" font-style="italic" font-size="7.85" fill="#6a3f7c">0 users here | Node ID: 674415</text>
<text x="943.9" y="384.4" text-anchor="middle" font-family="Liberation Sans, sans-serif" font-weight="bold" font-size="10.05" fill="#230a30">Matches query</text>
<text x="943.9" y="400.4" text-anchor="middle" font-family="Liberation Sans, sans-serif" font-size="8.4" fill="#3a1648" textLength="38.2" lengthAdjust="spacingAndGlyphs">1 criteria...</text>
<text x="889.4" y="413.0" font-family="Liberation Mono, monospace" font-size="10.4" fill="#230a30" stroke="#230a30" stroke-width=".2" textLength="15.9" lengthAdjust="spacingAndGlyphs">Yes</text>
<text x="993.0" y="413.0" font-family="Liberation Mono, monospace" font-size="10.4" fill="#230a30" stroke="#230a30" stroke-width=".2" textLength="10.6" lengthAdjust="spacingAndGlyphs">No</text>
</g>
<g>
<rect x="844.3" y="455.7" width="178.3" height="100.1" rx="3.2" fill="#eeeeee" stroke="#4c4c4c" stroke-width="1.25"/>
<path d="M843.8 482.7V458.7a3.4 3.4 0 0 1 3.4 -3.4H1019.7a3.4 3.4 0 0 1 3.4 3.4V482.7z" fill="#4b4b4b"/>
<g transform="translate(862.9 469.9)" fill="none" stroke="#d8d8d8" stroke-width="1" stroke-linejoin="round" stroke-linecap="round"><rect x="-4.2" y="-7.2" width="8.4" height="14.4" rx="1"/><path d="M-4.2 -5h8.4M-4.2 4.6h8.4M-.9 6h1.8"/></g>
<text x="933.5" y="473.5" text-anchor="middle" font-family="Liberation Mono, monospace" font-size="10.4" fill="#fff" stroke="#fff" stroke-width=".3" textLength="106.2" lengthAdjust="spacingAndGlyphs">App download welcome</text>
<text x="933.5" y="498.0" text-anchor="middle" font-family="Liberation Sans, sans-serif" font-style="italic" font-size="7.85" fill="#4a4a4a">0 users here | Node ID: 674417</text>
<text x="933.5" y="515.7" text-anchor="middle" font-family="Liberation Sans, sans-serif" font-weight="bold" font-size="10.05" fill="#111">Send mobile push</text>
<text x="933.5" y="531.7" text-anchor="middle" font-family="Liberation Sans, sans-serif" font-size="8.4" fill="#222" textLength="157" lengthAdjust="spacingAndGlyphs">Template created on Tue, Oct 29 2019, 1...</text>
<g transform="translate(880.0 512.2)"><circle r="4.7" fill="#2fc872"/><path d="M-2.1 .1 -.6 1.7 2.2 -1.5" fill="none" stroke="#fff" stroke-width="1.3" stroke-linecap="round" stroke-linejoin="round"/></g>
</g>
<g>
<rect x="1054.0" y="455.7" width="177.7" height="100.1" rx="3.2" fill="#eeeeee" stroke="#4c4c4c" stroke-width="1.25"/>
<path d="M1053.5 482.7V458.7a3.4 3.4 0 0 1 3.4 -3.4H1228.8a3.4 3.4 0 0 1 3.4 3.4V482.7z" fill="#4b4b4b"/>
<g transform="translate(1073.0 469.9)" fill="none" stroke="#d8d8d8" stroke-width="1" stroke-linejoin="round" stroke-linecap="round"><rect x="-6.7" y="-4.5" width="13.4" height="9"/><path d="M-6.6 -4.3 0 1.2 6.6 -4.3M-6.6 4.4l4.6-4.3M6.6 4.4 2 .1"/></g>
<text x="1142.8" y="473.5" text-anchor="middle" font-family="Liberation Mono, monospace" font-size="10.4" fill="#fff" stroke="#fff" stroke-width=".3" textLength="116.8" lengthAdjust="spacingAndGlyphs">Non app user follow up</text>
<text x="1142.8" y="498.0" text-anchor="middle" font-family="Liberation Sans, sans-serif" font-style="italic" font-size="7.85" fill="#4a4a4a">0 users here | Node ID: 674418</text>
<text x="1142.8" y="515.7" text-anchor="middle" font-family="Liberation Sans, sans-serif" font-weight="bold" font-size="10.05" fill="#111">Send email</text>
<text x="1142.8" y="531.7" text-anchor="middle" font-family="Liberation Sans, sans-serif" font-size="8.4" fill="#222" textLength="150.6" lengthAdjust="spacingAndGlyphs">Untitled campaign from Workflow 61995</text>
<g transform="translate(1105.2 512.2)"><circle r="4.7" fill="#2fc872"/><path d="M-2.1 .1 -.6 1.7 2.2 -1.5" fill="none" stroke="#fff" stroke-width="1.3" stroke-linecap="round" stroke-linejoin="round"/></g>
</g>
<g>
<rect x="934.4" y="588.3" width="178.0" height="99.7" rx="3.2" fill="#eeeeee" stroke="#4c4c4c" stroke-width="1.25"/>
<path d="M933.9 615.3V591.3a3.4 3.4 0 0 1 3.4 -3.4H1109.5a3.4 3.4 0 0 1 3.4 3.4V615.3z" fill="#4b4b4b"/>
<g transform="translate(953.0 602.5)" fill="none" stroke="#d8d8d8" stroke-width="1" stroke-linejoin="round" stroke-linecap="round"><circle r="6.4" cy=".4" stroke-width="1.15"/><path d="M0 .4 -2.9 -3.2" stroke-width="1.4"/><path d="M0 -6v2" stroke-width="1.2"/></g>
<text x="1023.4" y="606.1" text-anchor="middle" font-family="Liberation Mono, monospace" font-size="10.4" fill="#fff" stroke="#fff" stroke-width=".3" textLength="74.3" lengthAdjust="spacingAndGlyphs">Perform action</text>
<text x="1023.4" y="630.6" text-anchor="middle" font-family="Liberation Sans, sans-serif" font-style="italic" font-size="7.85" fill="#4a4a4a">0 users here | Node ID: 674419</text>
<text x="1023.4" y="654.3" text-anchor="middle" font-family="Liberation Sans, sans-serif" font-weight="bold" font-size="10.05" fill="#111">Delay for 15 min</text>
</g>
<g>
<rect x="933.7" y="722.0" width="177.6" height="99.5" rx="3.2" fill="#eeeeee" stroke="#4c4c4c" stroke-width="1.25"/>
<path d="M933.2 749.0V725.0a3.4 3.4 0 0 1 3.4 -3.4H1108.4a3.4 3.4 0 0 1 3.4 3.4V749.0z" fill="#4b4b4b"/>
<g transform="translate(952.3 736.2)" fill="none" stroke="#d8d8d8" stroke-width="1" stroke-linejoin="round" stroke-linecap="round"><rect x="-4" y="-7.2" width="8" height="14.4" rx=".8"/><path d="M-4 -5.2h8M-4 4.8h8M-2.2 -3.4h4.4v2.6h-4.4zM-2.2 1h4.4M-2.2 2.8h4.4"/></g>
<text x="1022.5" y="739.8" text-anchor="middle" font-family="Liberation Mono, monospace" font-size="10.4" fill="#fff" stroke="#fff" stroke-width=".3" textLength="95.6" lengthAdjust="spacingAndGlyphs">New app user offer</text>
<text x="1022.5" y="764.3" text-anchor="middle" font-family="Liberation Sans, sans-serif" font-style="italic" font-size="7.85" fill="#4a4a4a">0 users here | Node ID: 674420</text>
<text x="1022.5" y="782.0" text-anchor="middle" font-family="Liberation Sans, sans-serif" font-weight="bold" font-size="10.05" fill="#111">Send in app</text>
<text x="1022.5" y="798.0" text-anchor="middle" font-family="Liberation Sans, sans-serif" font-size="8.4" fill="#222" textLength="157" lengthAdjust="spacingAndGlyphs">Template created on Tue, Oct 29 2019, 1...</text>
<g transform="translate(985.0 778.5)"><circle r="4.7" fill="#2fc872"/><path d="M-2.1 .1 -.6 1.7 2.2 -1.5" fill="none" stroke="#fff" stroke-width="1.3" stroke-linecap="round" stroke-linejoin="round"/></g>
</g>
<circle cx="279.0" cy="322.5" r="6.4" fill="#fff" stroke="#161616" stroke-width="1.5"/>
<circle cx="279.0" cy="455.2" r="6.4" fill="#fff" stroke="#161616" stroke-width="1.5"/>
<circle cx="281.1" cy="588.6" r="6.4" fill="#fff" stroke="#161616" stroke-width="1.5"/>
<circle cx="304.9" cy="720.5" r="6.4" fill="#fff" stroke="#161616" stroke-width="1.5"/>
<circle cx="276.1" cy="857.5" r="6.4" fill="#fff" stroke="#161616" stroke-width="1.5"/>
<circle cx="488.8" cy="588.6" r="6.4" fill="#fff" stroke="#161616" stroke-width="1.5"/>
<circle cx="714.4" cy="187.9" r="6.4" fill="#fff" stroke="#161616" stroke-width="1.5"/>
<circle cx="714.4" cy="324.1" r="6.4" fill="#fff" stroke="#161616" stroke-width="1.5"/>
<circle cx="712.6" cy="456.8" r="6.4" fill="#fff" stroke="#161616" stroke-width="1.5"/>
<circle cx="806.3" cy="588.6" r="6.4" fill="#fff" stroke="#161616" stroke-width="1.5"/>
<circle cx="806.3" cy="721.0" r="6.4" fill="#fff" stroke="#161616" stroke-width="1.5"/>
<circle cx="806.3" cy="855.7" r="6.4" fill="#fff" stroke="#161616" stroke-width="1.5"/>
<circle cx="943.3" cy="187.6" r="6.4" fill="#fff" stroke="#161616" stroke-width="1.5"/>
<circle cx="943.3" cy="324.4" r="6.4" fill="#fff" stroke="#161616" stroke-width="1.5"/>
<circle cx="933.6" cy="455.7" r="6.4" fill="#fff" stroke="#161616" stroke-width="1.5"/>
<circle cx="1142.7" cy="455.7" r="6.4" fill="#fff" stroke="#161616" stroke-width="1.5"/>
<circle cx="1023.0" cy="588.3" r="6.4" fill="#fff" stroke="#161616" stroke-width="1.5"/>
<circle cx="1022.5" cy="722.0" r="6.4" fill="#fff" stroke="#161616" stroke-width="1.5"/>
<circle cx="279.0" cy="288.2" r="6.4" fill="#fff" stroke="#161616" stroke-width="1.5"/>
<circle cx="279.0" cy="422.6" r="6.4" fill="#fff" stroke="#161616" stroke-width="1.5"/>
<circle cx="279.0" cy="555.5" r="6.4" fill="#fff" stroke="#161616" stroke-width="1.5"/>
<circle cx="233.8" cy="688.2" r="6.4" fill="#fff" stroke="#161616" stroke-width="1.5"/>
<circle cx="327.4" cy="688.2" r="6.4" fill="#fff" stroke="#161616" stroke-width="1.5"/>
<circle cx="245.4" cy="819.7" r="6.4" fill="#fff" stroke="#161616" stroke-width="1.5"/>
<circle cx="363.0" cy="819.7" r="6.4" fill="#fff" stroke="#161616" stroke-width="1.5"/>
<circle cx="276.1" cy="954.1" r="6.4" fill="#fff" stroke="#161616" stroke-width="1.5"/>
<circle cx="488.8" cy="688.5" r="6.4" fill="#fff" stroke="#161616" stroke-width="1.5"/>
<circle cx="714.4" cy="288.0" r="6.4" fill="#fff" stroke="#161616" stroke-width="1.5"/>
<circle cx="714.4" cy="423.3" r="6.4" fill="#fff" stroke="#161616" stroke-width="1.5"/>
<circle cx="663.2" cy="556.6" r="6.4" fill="#fff" stroke="#161616" stroke-width="1.5"/>
<circle cx="762.0" cy="556.6" r="6.4" fill="#fff" stroke="#161616" stroke-width="1.5"/>
<circle cx="806.3" cy="688.5" r="6.4" fill="#fff" stroke="#161616" stroke-width="1.5"/>
<circle cx="806.3" cy="820.8" r="6.4" fill="#fff" stroke="#161616" stroke-width="1.5"/>
<circle cx="762.3" cy="956.0" r="6.4" fill="#fff" stroke="#161616" stroke-width="1.5"/>
<circle cx="850.6" cy="956.0" r="6.4" fill="#fff" stroke="#161616" stroke-width="1.5"/>
<circle cx="943.3" cy="287.5" r="6.4" fill="#fff" stroke="#161616" stroke-width="1.5"/>
<circle cx="894.3" cy="424.0" r="6.4" fill="#fff" stroke="#161616" stroke-width="1.5"/>
<circle cx="993.0" cy="424.0" r="6.4" fill="#fff" stroke="#161616" stroke-width="1.5"/>
<circle cx="933.6" cy="555.8" r="6.4" fill="#fff" stroke="#161616" stroke-width="1.5"/>
<circle cx="1142.7" cy="555.8" r="6.4" fill="#fff" stroke="#161616" stroke-width="1.5"/>
<circle cx="1023.0" cy="688.0" r="6.4" fill="#fff" stroke="#161616" stroke-width="1.5"/>
<circle cx="1022.5" cy="821.5" r="6.4" fill="#fff" stroke="#161616" stroke-width="1.5"/>
<path d="M279.0 288.2C279.0 305.4 279.0 305.4 279.0 322.5" fill="none" stroke="#7e7e7e" stroke-width="2.4"/>
<path d="M279.0 422.6C279.0 438.9 279.0 438.9 279.0 455.2" fill="none" stroke="#7e7e7e" stroke-width="2.4"/>
<path d="M279.0 555.5C279.0 572.0 281.1 572.0 281.1 588.6" fill="none" stroke="#7e7e7e" stroke-width="2.4"/>
<path d="M233.8 688.2C233.8 704.4 304.9 704.4 304.9 720.5" fill="none" stroke="#7e7e7e" stroke-width="2.4"/>
<path d="M327.4 688.2C408.1 688.2 408.1 588.6 488.8 588.6" fill="none" stroke="#7e7e7e" stroke-width="2.4"/>
<path d="M245.4 819.7C245.4 838.6 276.1 838.6 276.1 857.5" fill="none" stroke="#7e7e7e" stroke-width="2.4"/>
<path d="M363.0 819.7C538.7 819.7 538.7 187.9 714.4 187.9" fill="none" stroke="#7e7e7e" stroke-width="2.4"/>
<path d="M488.8 688.5C716.0 688.5 716.0 187.6 943.3 187.6" fill="none" stroke="#7e7e7e" stroke-width="2.4"/>
<path d="M714.4 288.0C714.4 306.1 714.4 306.1 714.4 324.1" fill="none" stroke="#7e7e7e" stroke-width="2.4"/>
<path d="M714.4 423.3C714.4 440.1 712.6 440.1 712.6 456.8" fill="none" stroke="#7e7e7e" stroke-width="2.4"/>
<path d="M663.2 556.6C663.2 707.0 276.1 707.0 276.1 857.5" fill="none" stroke="#7e7e7e" stroke-width="2.4"/>
<path d="M762.0 556.6C762.0 572.6 806.3 572.6 806.3 588.6" fill="none" stroke="#7e7e7e" stroke-width="2.4"/>
<path d="M806.3 688.5C806.3 704.8 806.3 704.8 806.3 721.0" fill="none" stroke="#7e7e7e" stroke-width="2.4"/>
<path d="M806.3 820.8C806.3 838.2 806.3 838.2 806.3 855.7" fill="none" stroke="#7e7e7e" stroke-width="2.4"/>
<path d="M762.3 956.0C519.2 956.0 519.2 857.5 276.1 857.5" fill="none" stroke="#7e7e7e" stroke-width="2.4"/>
<path d="M943.3 287.5C943.3 305.9 943.3 305.9 943.3 324.4" fill="none" stroke="#7e7e7e" stroke-width="2.4"/>
<path d="M894.3 424.0C894.3 439.9 933.6 439.9 933.6 455.7" fill="none" stroke="#7e7e7e" stroke-width="2.4"/>
<path d="M993.0 424.0C993.0 439.9 1142.7 439.9 1142.7 455.7" fill="none" stroke="#7e7e7e" stroke-width="2.4"/>
<path d="M933.6 555.8C933.6 572.0 1023.0 572.0 1023.0 588.3" fill="none" stroke="#7e7e7e" stroke-width="2.4"/>
<path d="M1023.0 688.0C1023.0 705.0 1022.5 705.0 1022.5 722.0" fill="none" stroke="#7e7e7e" stroke-width="2.4"/>
<path d="M274.6 320.3h8.8L279.0 326.6z" fill="#161616"/>
<path d="M274.6 453.0h8.8L279.0 459.3z" fill="#161616"/>
<path d="M276.7 586.4h8.8L281.1 592.7z" fill="#161616"/>
<path d="M300.5 718.3h8.8L304.9 724.6z" fill="#161616"/>
<path d="M271.7 855.3h8.8L276.1 861.6z" fill="#161616"/>
<path d="M484.4 586.4h8.8L488.8 592.7z" fill="#161616"/>
<path d="M710.0 185.7h8.8L714.4 192.0z" fill="#161616"/>
<path d="M710.0 321.9h8.8L714.4 328.2z" fill="#161616"/>
<path d="M708.2 454.6h8.8L712.6 460.9z" fill="#161616"/>
<path d="M801.9 586.4h8.8L806.3 592.7z" fill="#161616"/>
<path d="M801.9 718.8h8.8L806.3 725.1z" fill="#161616"/>
<path d="M801.9 853.5h8.8L806.3 859.8z" fill="#161616"/>
<path d="M938.9 185.4h8.8L943.3 191.7z" fill="#161616"/>
<path d="M938.9 322.2h8.8L943.3 328.5z" fill="#161616"/>
<path d="M929.2 453.5h8.8L933.6 459.8z" fill="#161616"/>
<path d="M1138.3 453.5h8.8L1142.7 459.8z" fill="#161616"/>
<path d="M1018.6 586.1h8.8L1023.0 592.4z" fill="#161616"/>
<path d="M1018.1 719.8h8.8L1022.5 726.1z" fill="#161616"/>
<circle cx="279.0" cy="288.2" r="3.1" fill="#808080"/>
<circle cx="279.0" cy="422.6" r="3.1" fill="#808080"/>
<circle cx="279.0" cy="555.5" r="3.1" fill="#808080"/>
<circle cx="233.8" cy="688.2" r="3.1" fill="#808080"/>
<circle cx="327.4" cy="688.2" r="3.1" fill="#808080"/>
<circle cx="245.4" cy="819.7" r="3.1" fill="#808080"/>
<circle cx="363.0" cy="819.7" r="3.1" fill="#808080"/>
<circle cx="488.8" cy="688.5" r="3.1" fill="#808080"/>
<circle cx="714.4" cy="288.0" r="3.1" fill="#808080"/>
<circle cx="714.4" cy="423.3" r="3.1" fill="#808080"/>
<circle cx="663.2" cy="556.6" r="3.1" fill="#808080"/>
<circle cx="762.0" cy="556.6" r="3.1" fill="#808080"/>
<circle cx="806.3" cy="688.5" r="3.1" fill="#808080"/>
<circle cx="806.3" cy="820.8" r="3.1" fill="#808080"/>
<circle cx="762.3" cy="956.0" r="3.1" fill="#808080"/>
<circle cx="943.3" cy="287.5" r="3.1" fill="#808080"/>
<circle cx="894.3" cy="424.0" r="3.1" fill="#808080"/>
<circle cx="993.0" cy="424.0" r="3.1" fill="#808080"/>
<circle cx="933.6" cy="555.8" r="3.1" fill="#808080"/>
<circle cx="1023.0" cy="688.0" r="3.1" fill="#808080"/>
</g>
<rect x="1235.7" y="172.2" width="27.7" height="74.6" fill="#fff"/>
<rect x="1235.7" y="194.6" width="27.7" height="1.1" fill="#e9e9e9"/><rect x="1235.7" y="220.4" width="27.7" height="1.1" fill="#e9e9e9"/><rect x="1235.7" y="246.4" width="27.7" height="1.1" fill="#e4e4e4"/>
<g transform="translate(1249.3 181.6)" fill="none" stroke="#1e1e1e" stroke-width="1.8" stroke-linecap="round"><circle cx="-1" cy="-1" r="3.5"/><path d="M1.9 1.9 4.9 4.9" stroke-width="2.2"/><path d="M-2.6 -1h3.2" stroke-width="1.1"/><path d="M-1 -2.6v3.2" stroke-width="1.1"/></g>
<text x="1250.8" y="210.7" text-anchor="middle" font-family="Liberation Sans, sans-serif" font-size="6.9" fill="#333">RESET</text>
<g transform="translate(1249.3 233.6)" fill="none" stroke="#1e1e1e" stroke-width="1.8" stroke-linecap="round"><circle cx="-1" cy="-1" r="3.5"/><path d="M1.9 1.9 4.9 4.9" stroke-width="2.2"/><path d="M-2.6 -1h3.2" stroke-width="1.1"/></g>
<path d="M166 153H1276V991H166z M168.5 156V988.4H1273.4V156z" fill="#f2b620" fill-rule="evenodd"/>
<rect x="133.4" y="293.4" width="67.2" height="43.4" rx="2" fill="#f8f8f8" stroke="#f2b827" stroke-width="2.7"/>
<g transform="translate(167 307)" fill="none" stroke="#3a3a3a" stroke-width=".9" stroke-linejoin="round"><rect x="-6.8" y="-4.7" width="13.6" height="9.4"/><path d="M-6.7 -4.5 0 1.2 6.7 -4.5M-6.7 4.6l4.7-4.4M6.7 4.6 2 .2"/></g>
<text x="167" y="327.4" text-anchor="middle" font-family="Liberation Sans, sans-serif" font-size="7.3" fill="#808080">SEND EMAIL</text>
<g transform="translate(179.6 307.6) rotate(-8 7 8) scale(1.06)" fill="#fff" stroke="#1c1c1c" stroke-width="1" stroke-linejoin="round" stroke-linecap="round">
<path d="M5.4 10.4V3.3a1 1 0 0 1 2 0V2.3a1.05 1.05 0 0 1 2.1 0v.8a1.05 1.05 0 0 1 2.1 0v1.8a1 1 0 0 1 2 0v7.6c0 2-1 3.7-3 3.7H7.4c-1.4 0-2.2-.7-2.8-1.7L1.1 9.5C.4 8.3 1.8 7.3 2.6 8.2z"/>
<path d="M7.4 3.3V8.4M9.5 3.1V8.4M11.6 4.9V8.4" stroke-width=".8"/>
<path d="M7.7 11.2v2.8M9.3 11.2v2.8M10.9 11.2v2.8" stroke-width=".7" stroke="#555"/></g>
</svg></body></html>
